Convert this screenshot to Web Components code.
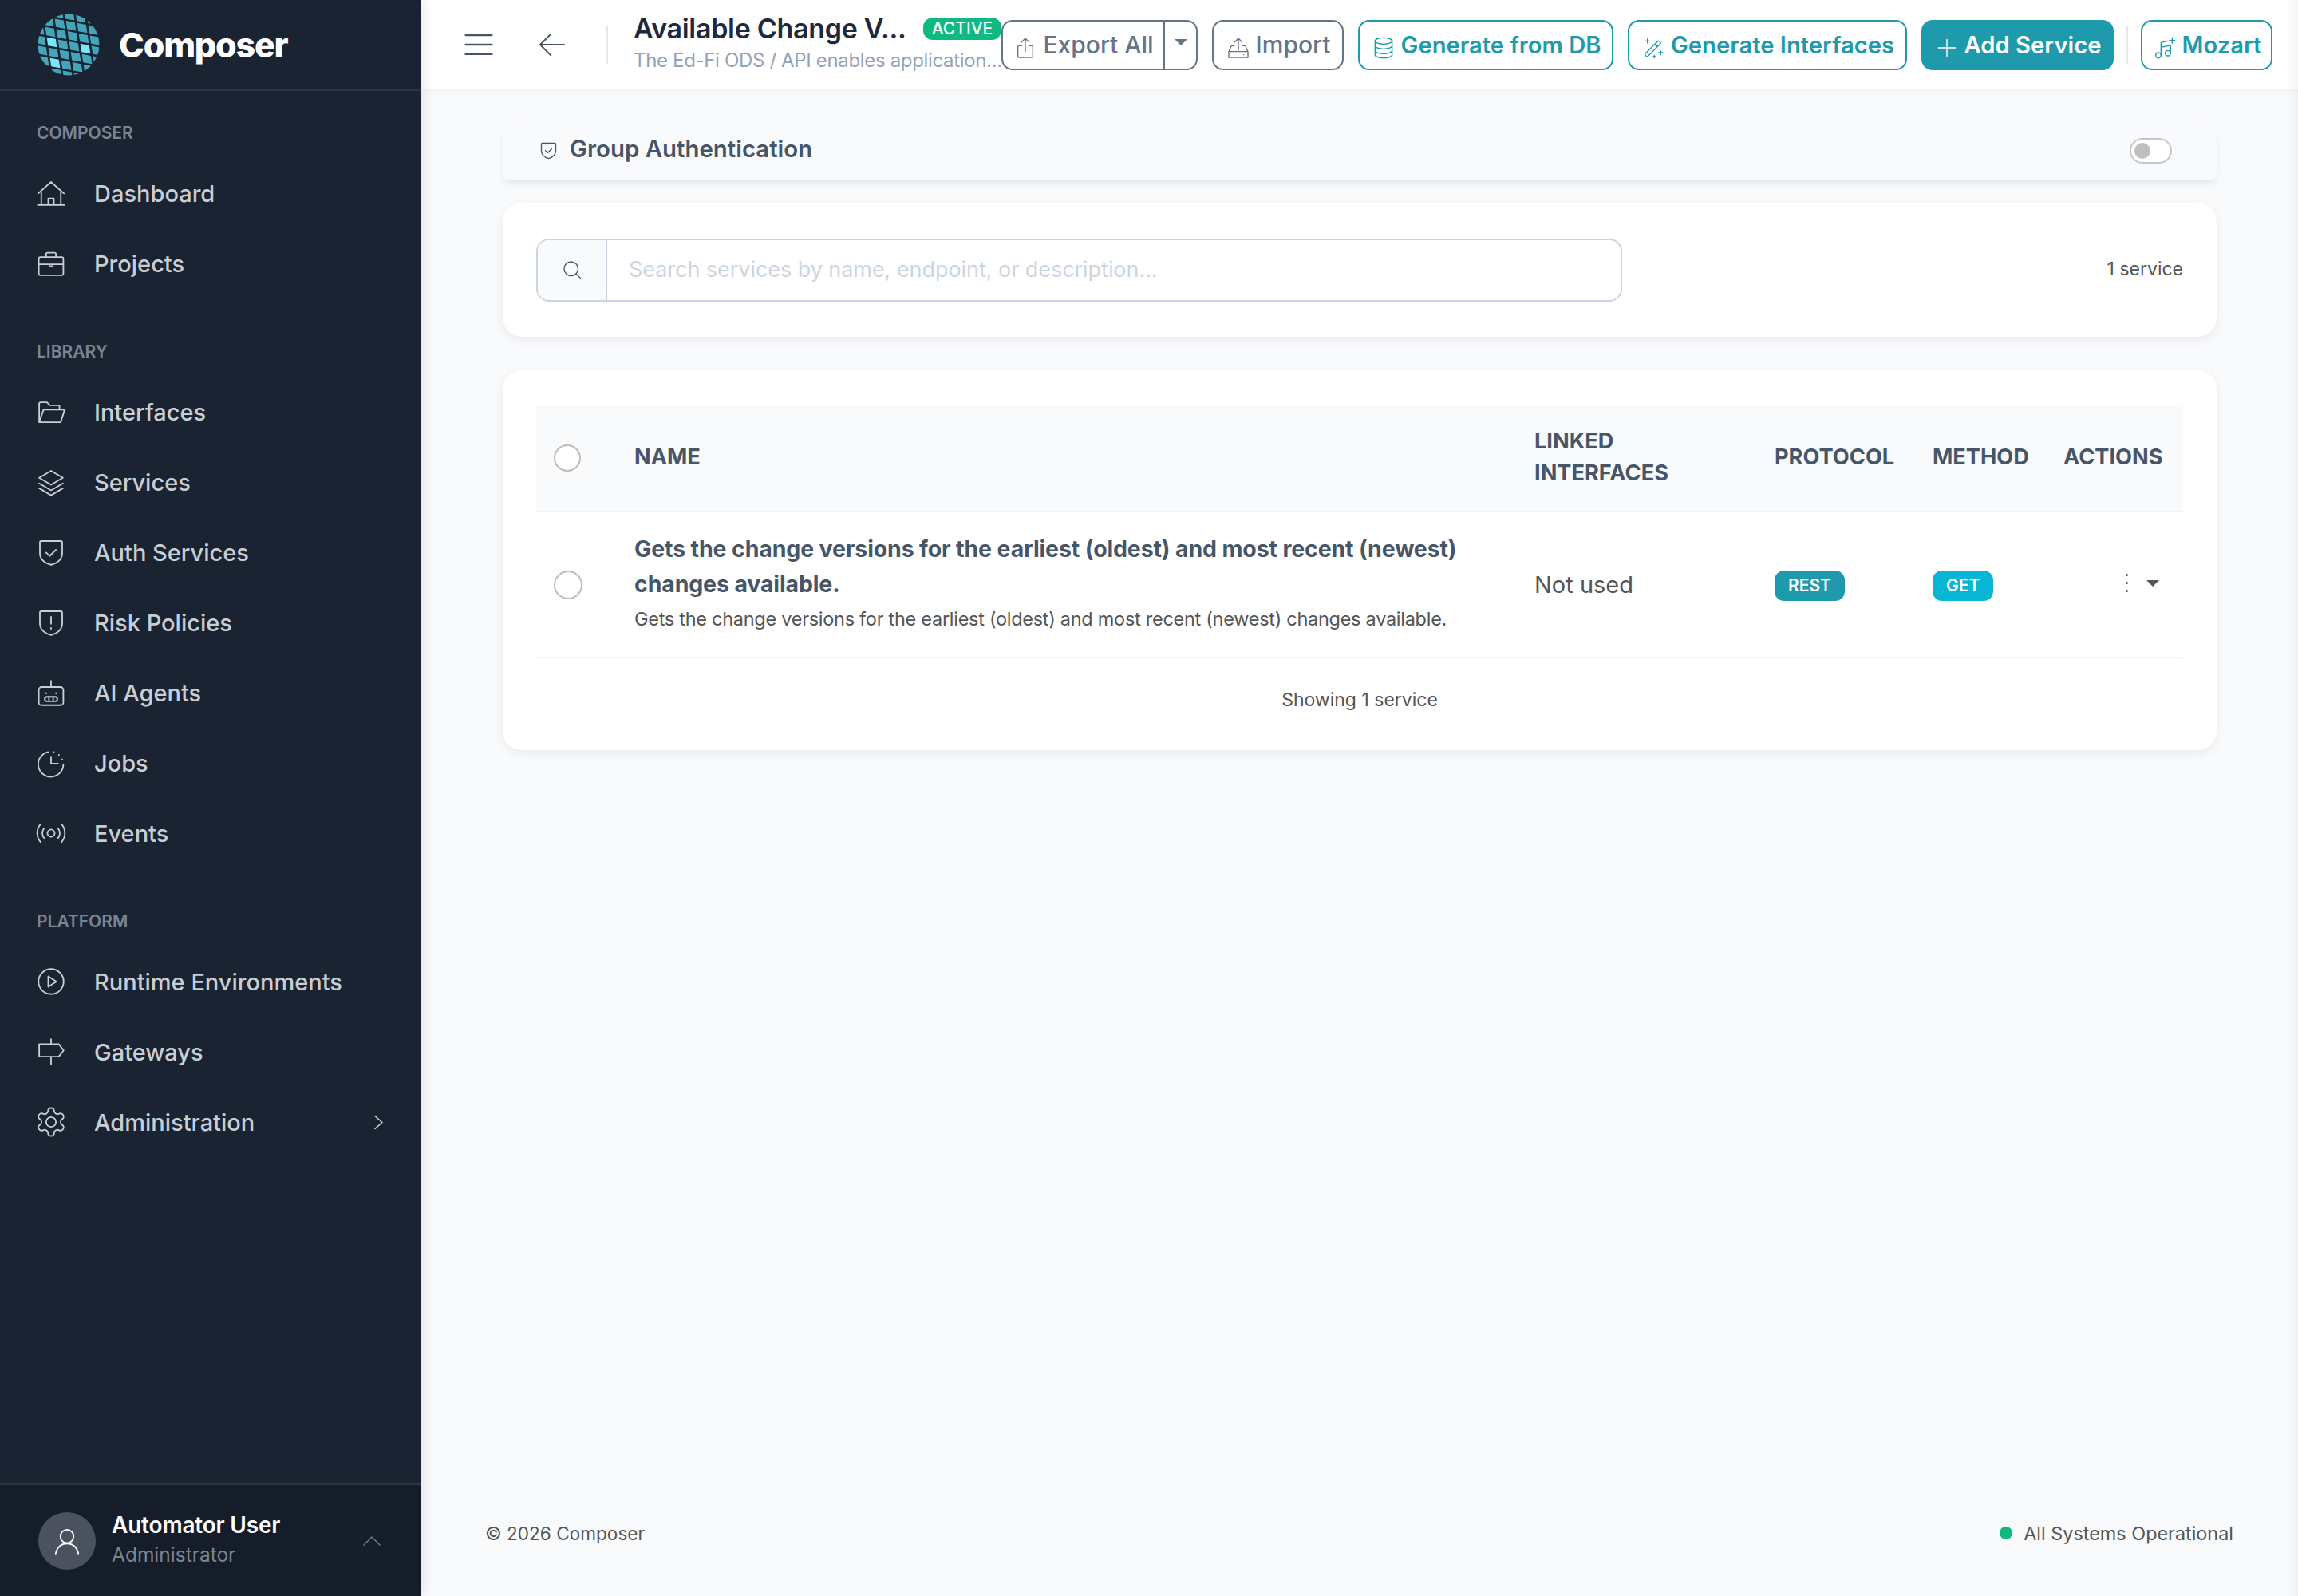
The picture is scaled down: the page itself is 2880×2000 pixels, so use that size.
<!DOCTYPE html>
<html lang="en">
<head>
<meta charset="utf-8">
<title>Composer</title>
<style>
  html, body { margin: 0; height: 100%; }
  body { font-family: Inter, "Liberation Sans", sans-serif; background: #f9fafc; color: #555; }
</style>
</head>
<body>
<app-shell>
  <side-nav slot="nav">
    <nav-section label="COMPOSER">
      <nav-item icon="home">Dashboard</nav-item>
      <nav-item icon="briefcase">Projects</nav-item>
    </nav-section>
    <nav-section label="LIBRARY">
      <nav-item icon="folder">Interfaces</nav-item>
      <nav-item icon="layers">Services</nav-item>
      <nav-item icon="shield-check">Auth Services</nav-item>
      <nav-item icon="shield-alert">Risk Policies</nav-item>
      <nav-item icon="robot">AI Agents</nav-item>
      <nav-item icon="clock-dash">Jobs</nav-item>
      <nav-item icon="broadcast">Events</nav-item>
    </nav-section>
    <nav-section label="PLATFORM">
      <nav-item icon="play">Runtime Environments</nav-item>
      <nav-item icon="signpost">Gateways</nav-item>
      <nav-item icon="gear" chevron>Administration</nav-item>
    </nav-section>
  </side-nav>

  <top-bar>
    <ui-button icon="export" split style="width:246px">Export All</ui-button>
    <ui-button icon="import" style="width:165px">Import</ui-button>
    <ui-button icon="database" variant="teal" style="width:320px">Generate from DB</ui-button>
    <ui-button icon="wand" variant="teal" style="width:350px">Generate Interfaces</ui-button>
    <ui-button icon="plus" variant="solid" style="width:241px">Add Service</ui-button>
    <ui-button icon="music" variant="teal" slot="last" style="width:165px">Mozart</ui-button>
  </top-bar>

  <page-content>
    <auth-bar>Group Authentication</auth-bar>
    <search-card count="1 service" placeholder="Search services by name, endpoint, or description..."></search-card>
    <services-table>
      <service-row
        name="Gets the change versions for the earliest (oldest) and most recent (newest) changes available."
        desc="Gets the change versions for the earliest (oldest) and most recent (newest) changes available."
        linked="Not used" protocol="REST" method="GET"></service-row>
    </services-table>
  </page-content>

  <page-footer></page-footer>
</app-shell>

<script>
const ICONS = {
  home: '<path d="M2.5 20.5h19M5 20.5v-9.5M19 20.5v-9.5M2.8 12.2 12 4l9.2 8.2M10 20.5v-4.7h4v4.7"/>',
  briefcase: '<rect x="3.2" y="7.5" width="17.6" height="13" rx="1.2"/><path d="M8.5 7.5V5.4a1 1 0 0 1 1-1h5a1 1 0 0 1 1 1v2.1M3.2 12.6h17.6M10.7 14h2.6"/>',
  folder: '<path d="M3.5 19.5V6.2a1 1 0 0 1 1-1h4.6l2 2.2H18v3M3.5 19.5h15.4l2.8-9H6.6l-3.1 9z"/>',
  layers: '<path d="M12 4 3.5 9 12 14l8.5-5zM3.5 13 12 18l8.5-5M3.5 16.5 12 21.5l8.5-5"/>',
  'shield-check': '<path d="M5 4h14a1 1 0 0 1 1 1v7.5c0 4.3-3.5 7.2-8 8.5-4.5-1.3-8-4.2-8-8.5V5a1 1 0 0 1 1-1z"/><path d="M8.5 12.2l2.5 2.5 4.5-4.4"/>',
  'shield-alert': '<path d="M5 4h14a1 1 0 0 1 1 1v7.5c0 4.3-3.5 7.2-8 8.5-4.5-1.3-8-4.2-8-8.5V5a1 1 0 0 1 1-1z"/><path d="M12 8v5M12 16v.6"/>',
  robot: '<rect x="3.2" y="8" width="17.6" height="13" rx="2"/><path d="M12 3.5V8M8.5 12.2v.4M15.5 12.2v.4"/><rect x="7.5" y="15" width="9" height="3.2" rx="1.6"/><path d="M10.5 15v3.2M13.5 15v3.2"/>',
  'clock-dash': '<path d="M20.8 13a9 9 0 1 1-11-8.8M12 7.5v5h5"/><path d="M14 4.3v.1M17.6 6.3v.1M20 9.5v.1"/>',
  broadcast: '<circle cx="12" cy="12" r="2.6"/><path d="M7 8.5a5.5 5.5 0 0 0 0 7M17 8.5a5.5 5.5 0 0 1 0 7M4.5 5.5a10 10 0 0 0 0 13M19.5 5.5a10 10 0 0 1 0 13"/>',
  play: '<circle cx="12" cy="12" r="9"/><path d="M10 8.3 15.8 12 10 15.7z"/>',
  signpost: '<path d="M12 3v3.5M12 15.5V21M3.5 6.5h14l3.5 4.5-3.5 4.5h-14z"/>',
  gear: '<path d="M12.22 2h-.44a2 2 0 0 0-2 2v.18a2 2 0 0 1-1 1.73l-.43.25a2 2 0 0 1-2 0l-.15-.08a2 2 0 0 0-2.73.73l-.22.38a2 2 0 0 0 .73 2.73l.15.1a2 2 0 0 1 1 1.72v.51a2 2 0 0 1-1 1.74l-.15.09a2 2 0 0 0-.73 2.73l.22.38a2 2 0 0 0 2.73.73l.15-.08a2 2 0 0 1 2 0l.43.25a2 2 0 0 1 1 1.73V20a2 2 0 0 0 2 2h.44a2 2 0 0 0 2-2v-.18a2 2 0 0 1 1-1.73l.43-.25a2 2 0 0 1 2 0l.15.08a2 2 0 0 0 2.73-.73l.22-.39a2 2 0 0 0-.73-2.73l-.15-.08a2 2 0 0 1-1-1.74v-.5a2 2 0 0 1 1-1.74l.15-.09a2 2 0 0 0 .73-2.73l-.22-.38a2 2 0 0 0-2.73-.73l-.15.08a2 2 0 0 1-2 0l-.43-.25a2 2 0 0 1-1-1.73V4a2 2 0 0 0-2-2z"/><circle cx="12" cy="12" r="3.5"/>',
  export: '<path d="M8.5 10H6a1 1 0 0 0-1 1v9a1 1 0 0 0 1 1h12a1 1 0 0 0 1-1v-9a1 1 0 0 0-1-1h-2.5M12 15.5V3M8.5 6.5 12 3l3.5 3.5"/>',
  import: '<path d="M12 14V3M8.5 6.5 12 3l3.5 3.5M8 10H5.5L3 15.5V21h18v-5.5L18.5 10H16M3 15.5h18M17 18.5h.1"/>',
  database: '<ellipse cx="12" cy="5.5" rx="8" ry="3"/><path d="M4 5.5v13c0 1.7 3.6 3 8 3s8-1.3 8-3v-13M4 10c0 1.7 3.6 3 8 3s8-1.3 8-3M4 14.5c0 1.7 3.6 3 8 3s8-1.3 8-3"/>',
  wand: '<path d="M4.5 17.5 16.3 5.7a1 1 0 0 1 1.4 0l1 1a1 1 0 0 1 0 1.4L6.9 19.9a1 1 0 0 1-1.4 0l-1-1a1 1 0 0 1 0-1.4zM13.5 8.5l2.4 2.4M6.5 3.5v4M4.5 5.5h4M19 14.5v4M17 16.5h4M13 19v2.5M11.8 20.2h2.4"/>',
  plus: '<path d="M12 4v16M4 12h16"/>',
  music: '<circle cx="6" cy="19" r="2.5"/><circle cx="15" cy="17" r="2.5"/><path d="M8.5 19V7l6.5-1.5M17.5 17v-6.5M8.5 11.5l9-1.8M19 2.5v5M16.5 5h5"/>',
  search: '<circle cx="11" cy="11" r="7"/><path d="m16 16 4.5 4.5"/>',
  menu: '<path d="M3 5.5h18M3 12h18M3 18.5h18"/>',
  back: '<path d="M21 12H3M11 4l-8 8 8 8"/>',
  'chev-right': '<path d="m8 5 8 7-8 7"/>',
  'chev-up': '<path d="m4 16 8-8 8 8"/>',
  user: '<circle cx="12" cy="8.5" r="5"/><path d="M3.5 21.5c1-4.5 4-7.5 8.5-7.5s7.5 3 8.5 7.5"/>'
};

class UiIcon extends HTMLElement {
  connectedCallback() {
    const size = this.getAttribute('size') || 24;
    const sw = this.getAttribute('stroke') || 1.5;
    this.attachShadow({ mode: 'open' }).innerHTML = `
      <style>
        :host { display: inline-flex; flex: none; line-height: 0; }
        svg { fill: none; stroke: currentColor; stroke-linecap: round; stroke-linejoin: round; }
      </style>
      <svg width="${size}" height="${size}" viewBox="0 0 24 24" stroke-width="${sw}">${ICONS[this.getAttribute('name')] || ''}</svg>`;
  }
}
customElements.define('ui-icon', UiIcon);

class AppShell extends HTMLElement {
  constructor() {
    super();
    this.attachShadow({ mode: 'open' }).innerHTML = `
      <style>
        :host { display: flex; height: 100vh; position: relative; overflow: hidden; }
        .main { flex: 1; min-width: 0; display: flex; flex-direction: column; position: relative; }
        .edge { position: absolute; top: 0; bottom: 0; right: 0; width: 16px; pointer-events: none;
                background: linear-gradient(to right, rgba(0,0,0,0), rgba(0,0,0,.035)); z-index: 3; }
      </style>
      <slot name="nav"></slot>
      <div class="main"><slot></slot><div class="edge"></div></div>`;
  }
}
customElements.define('app-shell', AppShell);

// logo cells sit on a skewed grid, clipped to a circle
function logoCells() {
  let out = '';
  for (let r = -4; r <= 4; r++) {
    for (let c = -4; c <= 5; c++) {
      const hot = (r === 0 && c === 0) || (r === 0 && c === 3) || (r === 2 && c === 0);
      out += `<rect x="${c - 0.4}" y="${r - 0.4}" width="0.8" height="0.8" fill="${hot ? '#7be6fb' : '#44a5b8'}"/>`;
    }
  }
  return out;
}

class SideNav extends HTMLElement {
  constructor() {
    super();
    this.attachShadow({ mode: 'open' }).innerHTML = `
      <style>
        :host { display: flex; flex-direction: column; flex: none; width: 528px; height: 100%; background: #1a2332;
                box-shadow: 2px 0 14px rgba(0,0,0,.1); position: relative; z-index: 5; }
        .brand { height: 112px; flex: none; display: flex; align-items: center; padding-left: 47px; gap: 24px;
                 border-bottom: 2px solid #2a3543; box-sizing: content-box; }
        .brand svg { display: block; }
        .brand span { font-size: 43px; font-weight: 800; color: #fff; letter-spacing: -1.2px; }
        .sections { flex: 1; padding-top: 33px; }
      </style>
      <div class="brand">
        <svg width="78" height="78" viewBox="47 16 78 78">
          <defs><clipPath id="globe"><circle cx="86" cy="55" r="38.5"/></clipPath></defs>
          <g clip-path="url(#globe)"><g transform="matrix(14 2.67 2 13 65 52)">${logoCells()}</g></g>
        </svg>
        <span>Composer</span>
      </div>
      <div class="sections"><slot></slot></div>
      <user-card name="Automator User" role="Administrator"></user-card>`;
  }
}
customElements.define('side-nav', SideNav);

class NavSection extends HTMLElement {
  constructor() {
    super();
    this.attachShadow({ mode: 'open' }).innerHTML = `
      <style>
        :host { display: block; margin-bottom: 47px; }
        .label { height: 40px; line-height: 40px; margin-bottom: 11px; padding-left: 46px;
                 font-size: 21px; font-weight: 600; color: #7b8492; }
      </style>
      <div class="label"></div><slot></slot>`;
  }
  connectedCallback() {
    this.shadowRoot.querySelector('.label').textContent = this.getAttribute('label');
  }
}
customElements.define('nav-section', NavSection);

class NavItem extends HTMLElement {
  constructor() {
    super();
    this.attachShadow({ mode: 'open' }).innerHTML = `
      <style>
        :host { display: flex; align-items: center; height: 88px; padding-left: 43px; padding-right: 40px;
                color: #c9cdd4; font-size: 29px; font-weight: 500; }
        .ic { width: 42px; margin-right: 33px; display: flex; }
        .txt { flex: 1; white-space: nowrap; }
        .end { display: flex; }
      </style>
      <span class="ic"></span><span class="txt"><slot></slot></span><span class="end"></span>`;
  }
  connectedCallback() {
    this.shadowRoot.querySelector('.ic').innerHTML = `<ui-icon name="${this.getAttribute('icon')}" size="42" stroke="1.05"></ui-icon>`;
    if (this.hasAttribute('chevron')) {
      this.shadowRoot.querySelector('.end').innerHTML = '<ui-icon name="chev-right" size="27" stroke="1.4"></ui-icon>';
    }
  }
}
customElements.define('nav-item', NavItem);

class UserCard extends HTMLElement {
  constructor() {
    super();
    this.attachShadow({ mode: 'open' }).innerHTML = `
      <style>
        :host { display: flex; align-items: center; flex: none; height: 141px; box-sizing: border-box; padding: 0 48px;
                background: #161d2a; border-top: 2px solid #2a3543; }
        .avatar { width: 72px; height: 72px; border-radius: 50%; background: #4a5260; color: #fff; flex: none;
                  display: flex; align-items: center; justify-content: center; margin-right: 20px; }
        .info { flex: 1; margin-top: -3px; }
        .name { font-size: 28px; font-weight: 600; color: #fff; line-height: 38px; letter-spacing: -.2px; }
        .role { font-size: 24.5px; color: #7b8492; line-height: 36px; }
        .chev { color: #7b8492; margin-right: -1px; }
      </style>
      <div class="avatar"><ui-icon name="user" size="40" stroke="1.1"></ui-icon></div>
      <div class="info"><div class="name"></div><div class="role"></div></div>
      <ui-icon class="chev" name="chev-up" size="30" stroke="1"></ui-icon>`;
  }
  connectedCallback() {
    this.shadowRoot.querySelector('.name').textContent = this.getAttribute('name');
    this.shadowRoot.querySelector('.role').textContent = this.getAttribute('role');
  }
}
customElements.define('user-card', UserCard);

class TopBar extends HTMLElement {
  constructor() {
    super();
    this.attachShadow({ mode: 'open' }).innerHTML = `
      <style>
        :host { display: flex; align-items: center; flex: none; height: 112px; background: #fff; box-sizing: border-box;
                padding-left: 50px; padding-right: 32px; box-shadow: 0 2px 8px rgba(0,0,0,.04); position: relative; z-index: 2; }
        .menu { color: #475569; margin-right: 50px; display: flex; }
        .back { color: #475569; margin-right: 48px; display: flex; }
        .sep { width: 2px; height: 48px; background: #e5e7eb; flex: none; }
        .titles { width: 461px; margin-left: 32px; flex: none; }
        .row { display: flex; align-items: center; height: 38px; margin-bottom: 6px; margin-top: -5px; }
        h1 { margin: 0; font-size: 34px; font-weight: 600; color: #1e293b; letter-spacing: -.3px; white-space: nowrap; width: 363px; }
        .badge { background: #10b981; color: #fff; font-size: 21px; font-weight: 500; height: 28px; line-height: 28px;
                 width: 98px; text-align: center; border-radius: 12px; flex: none; }
        .sub { font-size: 24px; color: #94a3b8; white-space: nowrap; line-height: 30px; letter-spacing: -.34px; }
        .btns { display: flex; align-items: center; gap: 18px; flex: none; }
        .vsep { width: 2px; height: 48px; background: #e5e7eb; margin: 0 16px; flex: none; }
      </style>
      <span class="menu"><ui-icon name="menu" size="44" stroke="1.25"></ui-icon></span>
      <span class="back"><ui-icon name="back" size="40" stroke="1.2"></ui-icon></span>
      <span class="sep"></span>
      <div class="titles">
        <div class="row"><h1>Available Change V...</h1><span class="badge">ACTIVE</span></div>
        <div class="sub">The Ed-Fi ODS / API enables application...</div>
      </div>
      <div class="btns"><slot></slot></div>
      <span class="vsep"></span>
      <slot name="last"></slot>`;
  }
}
customElements.define('top-bar', TopBar);

class UiButton extends HTMLElement {
  constructor() {
    super();
    this.attachShadow({ mode: 'open' }).innerHTML = `
      <style>
        :host { display: inline-flex; align-items: stretch; flex: none; height: 63px; box-sizing: border-box;
                border: 2px solid #64748b; border-radius: 14px; color: #64748b; background: #fff;
                font-size: 30px; font-weight: 500; white-space: nowrap; }
        :host([variant="teal"]) { border-color: #1f9aac; color: #1f9aac; font-size: 29.2px; font-weight: 600; }
        :host([variant="solid"]) { border-color: #1f9aac; background: #1f9aac; color: #fff; font-size: 29.2px; font-weight: 600; }
        .main { flex: 1; display: flex; align-items: center; justify-content: center; gap: 6px; }
        .caret { width: 39px; flex: none; border-left: 2px solid #64748b; display: none; align-items: center; justify-content: center; padding-bottom: 6px; }
        :host([split]) .caret { display: flex; }
        .caret i { border: 8px solid transparent; border-top: 8px solid #64748b; border-bottom: 0; }
        .ic { display: flex; margin-top: 7px; }
      </style>
      <div class="main"><span class="ic"></span><span><slot></slot></span></div>
      <div class="caret"><i></i></div>`;
  }
  connectedCallback() {
    this.shadowRoot.querySelector('.ic').innerHTML = `<ui-icon name="${this.getAttribute('icon')}" size="32" stroke="1.05"></ui-icon>`;
  }
}
customElements.define('ui-button', UiButton);

class PageContent extends HTMLElement {
  constructor() {
    super();
    this.attachShadow({ mode: 'open' }).innerHTML = `
      <style>
        :host { display: flex; flex-direction: column; flex: 1; padding: 41px 102px 0; }
      </style>
      <slot></slot>`;
  }
}
customElements.define('page-content', PageContent);

class AuthBar extends HTMLElement {
  constructor() {
    super();
    this.attachShadow({ mode: 'open' }).innerHTML = `
      <style>
        :host { display: flex; align-items: center; height: 73px; box-sizing: border-box; padding: 0 56px 2px 44px;
                background: #f9fafc; border-radius: 20px 20px 8px 8px; box-shadow: 0 5px 10px -2px rgba(15,23,42,.1);
                color: #475569; font-size: 29.4px; font-weight: 600; margin-bottom: 28px; }
        .txt { flex: 1; margin: -4px 0 0 13px; }
        .toggle { width: 53px; height: 32px; box-sizing: border-box; border: 2px solid #c4c7cc; border-radius: 16px; background: #fff;
                  display: flex; align-items: center; padding-left: 4px; }
        .toggle i { width: 20px; height: 20px; border-radius: 50%; background: #bfbfbf; }
      </style>
      <ui-icon name="shield-check" size="27" stroke="1.2"></ui-icon>
      <span class="txt"><slot></slot></span>
      <span class="toggle"><i></i></span>`;
  }
}
customElements.define('auth-bar', AuthBar);

class SearchCard extends HTMLElement {
  constructor() {
    super();
    this.attachShadow({ mode: 'open' }).innerHTML = `
      <style>
        :host { display: flex; align-items: center; justify-content: space-between; height: 168px; box-sizing: border-box;
                padding: 0 42px; background: #fff; border-radius: 24px; box-shadow: 0 4px 12px rgba(15,23,42,.07); margin-bottom: 42px; }
        .group { display: flex; width: 1361px; height: 79px; box-sizing: border-box; border: 2px solid #cbd5e1; border-radius: 16px; overflow: hidden; }
        .addon { width: 85px; flex: none; background: #f8fafc; border-right: 2px solid #cbd5e1; color: #475569;
                 display: flex; align-items: center; justify-content: center; }
        .ph { flex: 1; display: flex; align-items: center; padding: 0 0 2px 27px; font-size: 27px; color: #cbd5e1; letter-spacing: -.05px; }
        .count { font-size: 23px; color: #555; margin-top: -3px; }
      </style>
      <div class="group">
        <span class="addon"><ui-icon name="search" size="30" stroke="1.1"></ui-icon></span>
        <span class="ph"></span>
      </div>
      <span class="count"></span>`;
  }
  connectedCallback() {
    this.shadowRoot.querySelector('.ph').textContent = this.getAttribute('placeholder');
    this.shadowRoot.querySelector('.count').textContent = this.getAttribute('count');
  }
}
customElements.define('search-card', SearchCard);

const TABLE_COLS = '101px 1128px 301px 198px 164px 172px';

class ServicesTable extends HTMLElement {
  constructor() {
    super();
    this.attachShadow({ mode: 'open' }).innerHTML = `
      <style>
        :host { display: block; box-sizing: border-box; height: 476px; padding: 44px 42px 0; background: #fff;
                border-radius: 24px; box-shadow: 0 4px 12px rgba(15,23,42,.07); }
        .head { display: grid; grid-template-columns: ${TABLE_COLS}; height: 134px; align-items: center; background: #f8fafc;
                border-bottom: 2px solid #f1f3f5; box-sizing: border-box;
                font-size: 27.2px; font-weight: 700; color: #475569; line-height: 40px; }
        .head > div { padding-left: 22px; margin-top: -3px; }
        .head .check { margin-top: 0; }
        .radio { display: block; width: 34px; height: 34px; box-sizing: border-box; border: 2px solid #bdbdbd; border-radius: 50%; background: #fff; }
        .foot { text-align: center; font-size: 23px; color: #555; padding-top: 37px; line-height: 30px; }
      </style>
      <div class="head">
        <div class="check"><span class="radio"></span></div>
        <div>NAME</div>
        <div>LINKED<br>INTERFACES</div>
        <div>PROTOCOL</div>
        <div>METHOD</div>
        <div>ACTIONS</div>
      </div>
      <slot></slot>
      <div class="foot">Showing 1 service</div>`;
  }
}
customElements.define('services-table', ServicesTable);

class ServiceRow extends HTMLElement {
  constructor() {
    super();
    this.attachShadow({ mode: 'open' }).innerHTML = `
      <style>
        :host { display: grid; grid-template-columns: ${TABLE_COLS}; height: 183px; box-sizing: border-box; align-items: center;
                border-bottom: 2px solid #f1f3f5; }
        .cell { padding-left: 22px; }
        .radio { display: block; width: 36px; height: 36px; box-sizing: border-box; border: 2px solid #bdbdbd; border-radius: 50%; }
        .title { margin-top: -5px; }
        .name { font-size: 28.5px; font-weight: 700; color: #475569; line-height: 44px; padding-right: 40px; letter-spacing: -.14px; }
        .desc { font-size: 23.5px; color: #555; line-height: 36px; margin-top: 4px; white-space: nowrap; letter-spacing: -.28px; }
        .linked { font-size: 29px; color: #555; }
        .pill { display: inline-block; height: 38px; line-height: 38px; border-radius: 12px; color: #fff; margin-top: 3px;
                font-size: 21px; font-weight: 600; text-align: center; padding: 0 17px; }
        .rest { background: #1f9aac; }
        .get { background: #06b6d4; }
        .acts { display: flex; align-items: center; justify-content: flex-end; padding-right: 30px; margin-top: -4px; }
        .dots { display: flex; flex-direction: column; gap: 7px; margin-right: 23px; }
        .dots i { width: 3px; height: 3px; border-radius: 50%; background: #555; }
        .caret { border: 8px solid transparent; border-top: 8px solid #555; border-bottom: 0; }
      </style>
      <div class="cell"><span class="radio"></span></div>
      <div class="cell title">
        <div class="name"></div>
        <div class="desc"></div>
      </div>
      <div class="cell linked"></div>
      <div class="cell"><span class="pill rest"></span></div>
      <div class="cell"><span class="pill get"></span></div>
      <div class="acts"><span class="dots"><i></i><i></i><i></i></span><span class="caret"></span></div>`;
  }
  connectedCallback() {
    const sr = this.shadowRoot;
    sr.querySelector('.name').textContent = this.getAttribute('name');
    sr.querySelector('.desc').textContent = this.getAttribute('desc');
    sr.querySelector('.linked').textContent = this.getAttribute('linked');
    sr.querySelector('.rest').textContent = this.getAttribute('protocol');
    sr.querySelector('.get').textContent = this.getAttribute('method');
  }
}
customElements.define('service-row', ServiceRow);

class PageFooter extends HTMLElement {
  constructor() {
    super();
    this.attachShadow({ mode: 'open' }).innerHTML = `
      <style>
        :host { display: flex; align-items: center; justify-content: space-between; flex: none; height: 154px; box-sizing: border-box;
                padding: 0 81px 4px 80px; font-size: 22.6px; color: #555; }
        .status { display: flex; align-items: center; gap: 14px; font-size: 23.4px; }
        .status i { width: 16px; height: 16px; border-radius: 50%; background: #10b981; }
      </style>
      <span>© 2026 Composer</span>
      <span class="status"><i></i>All Systems Operational</span>`;
  }
}
customElements.define('page-footer', PageFooter);
</script>
</body>
</html>
